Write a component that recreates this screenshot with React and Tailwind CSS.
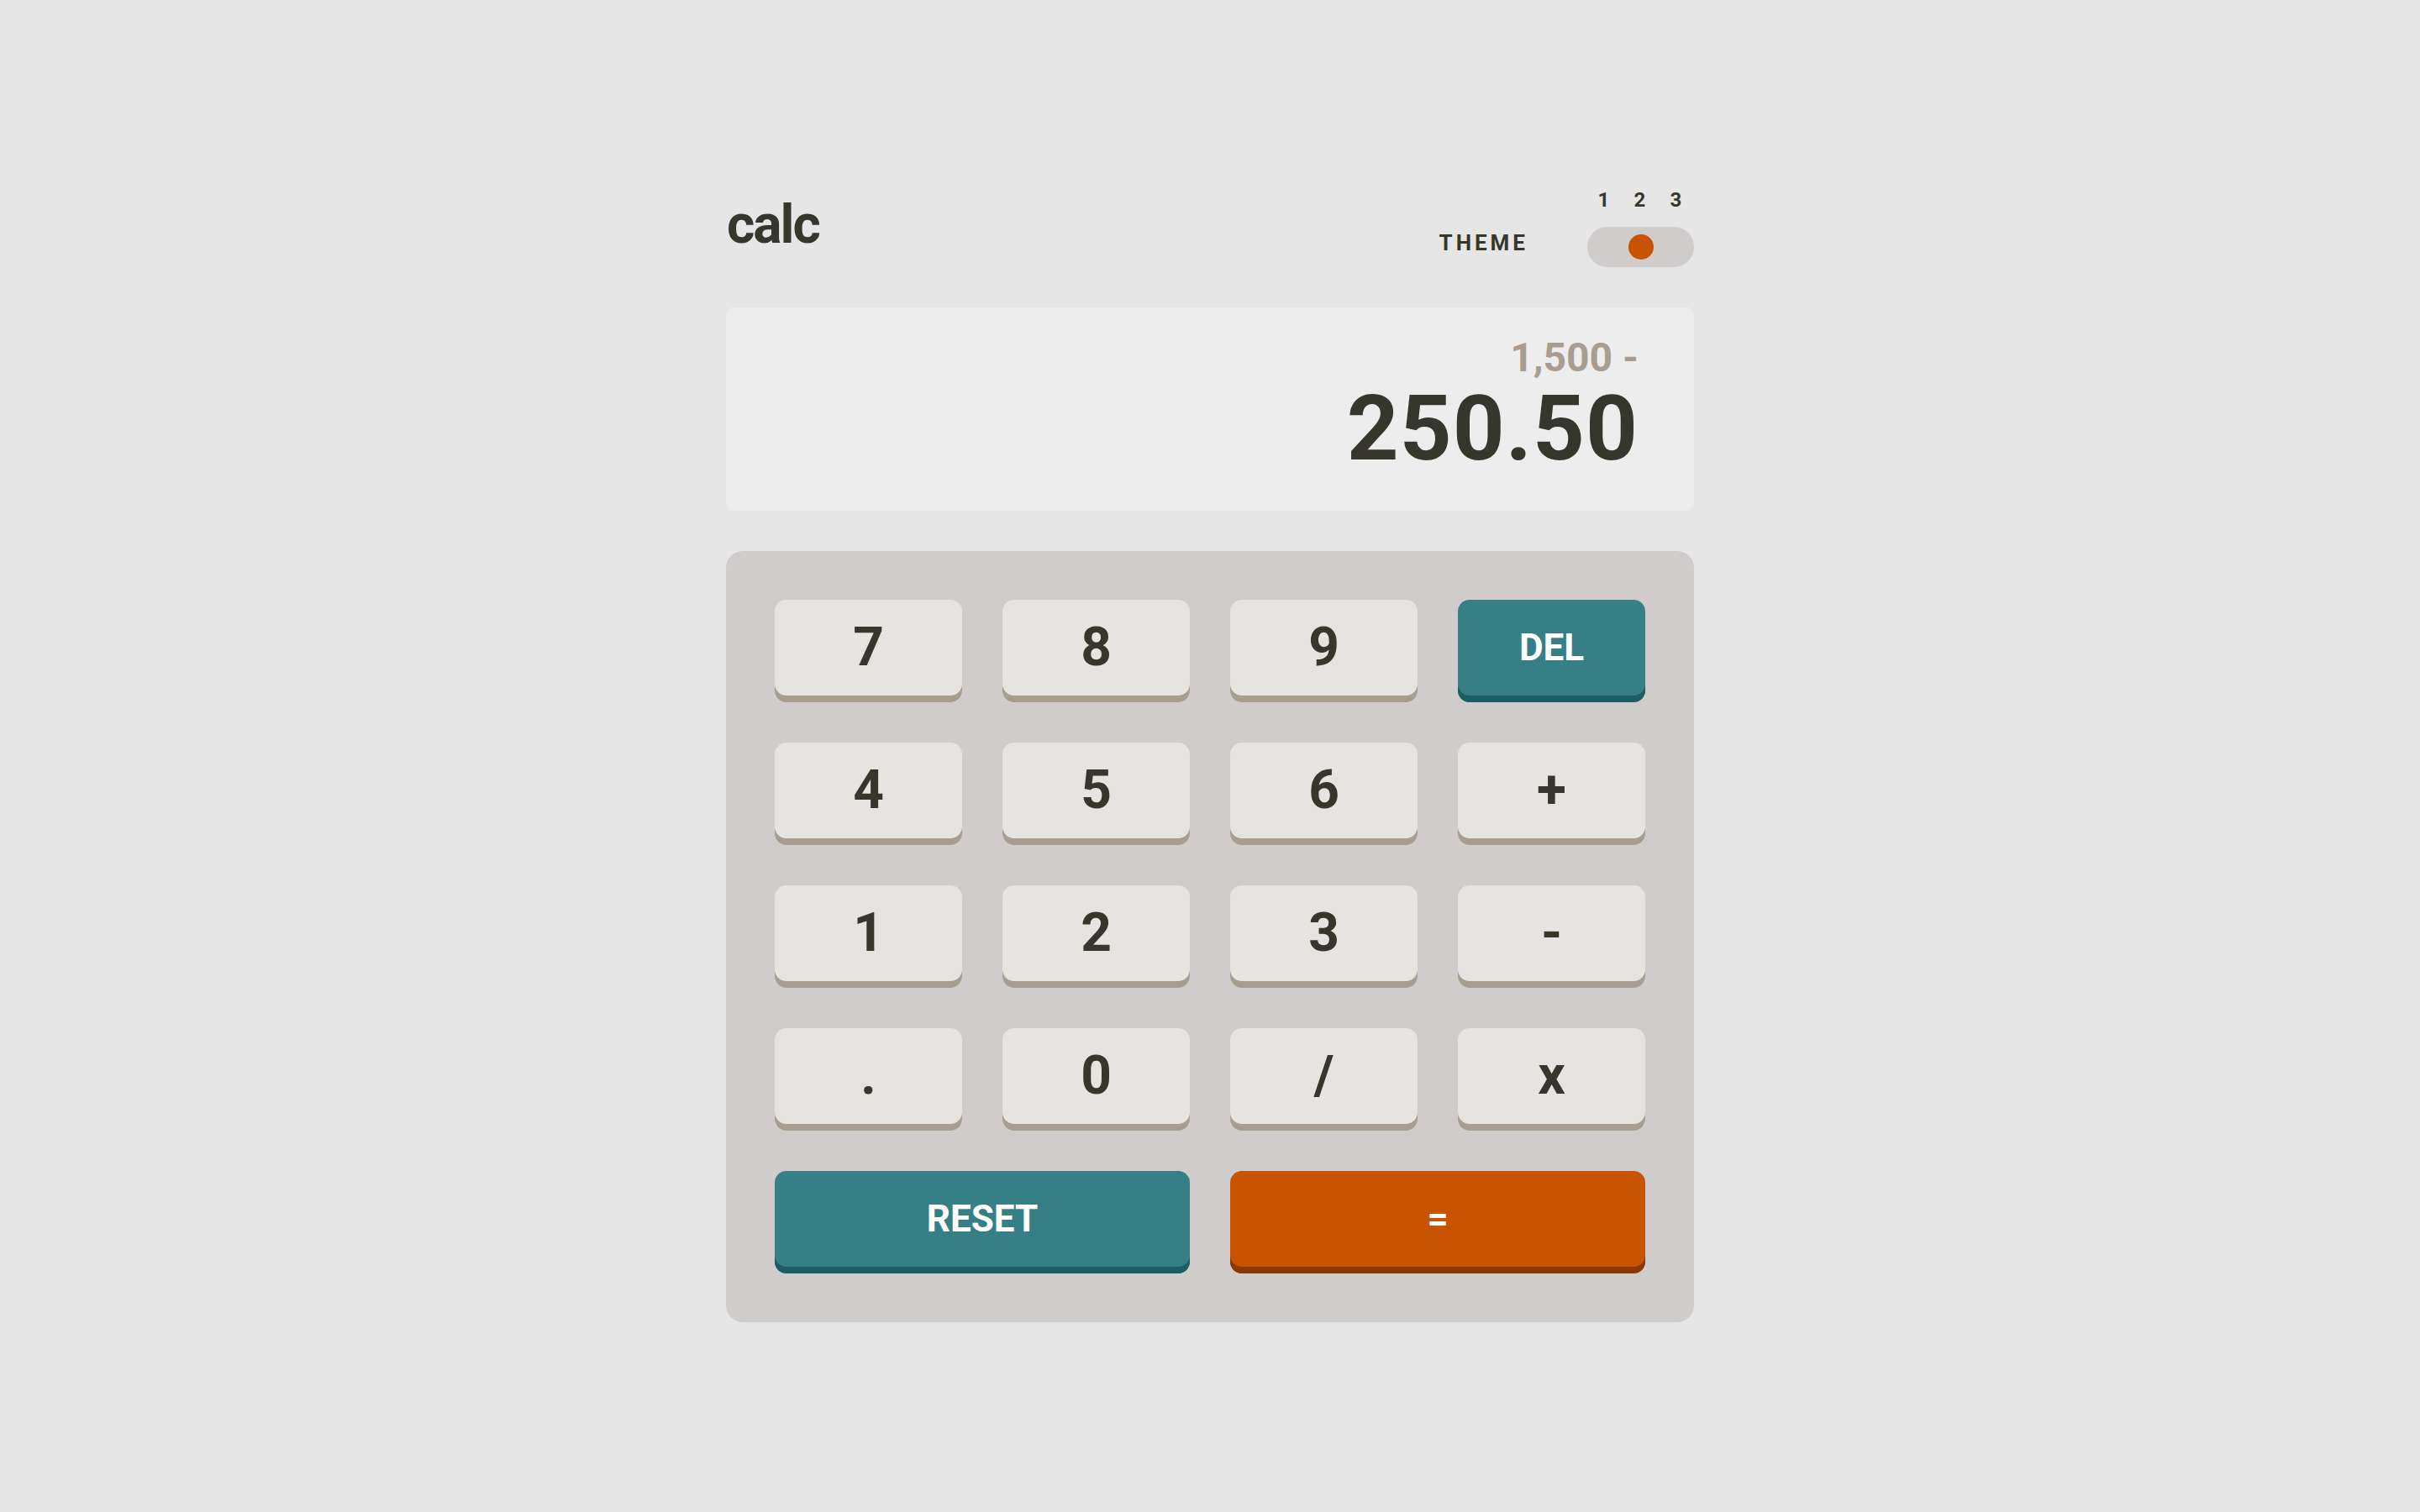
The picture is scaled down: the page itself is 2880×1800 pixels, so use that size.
import React, { useState } from 'react';

const font = { fontFamily: 'Roboto, "Liberation Sans", sans-serif' };

const keys = [
  { label: '7' }, { label: '8' }, { label: '9' }, { label: 'DEL', kind: 'teal' },
  { label: '4' }, { label: '5' }, { label: '6' }, { label: '+' },
  { label: '1' }, { label: '2' }, { label: '3' }, { label: '-' },
  { label: '.' }, { label: '0' }, { label: '/' }, { label: 'x' },
  { label: 'RESET', kind: 'teal', wide: true }, { label: '=', kind: 'orange', wide: true },
];

const Key = ({ label, kind, wide }) => {
  let cls = 'bg-[#e5e4e1] text-[#36362c] shadow-[inset_0_-8px_0_#a79e91] text-[64px]';
  if (kind === 'teal') cls = 'bg-[#377f86] text-white shadow-[inset_0_-8px_0_#1b5f65] text-[44px]';
  if (kind === 'orange') cls = 'bg-[#c85402] text-white shadow-[inset_0_-8px_0_#893901] text-[44px]';
  return (
    <button
      className={`${wide ? 'col-span-2' : ''} ${cls} h-[122px] rounded-[14px] pb-[8px] flex items-center justify-center font-bold leading-none`}
    >
      {label}
    </button>
  );
};

export default function App() {
  const [theme] = useState(2);

  return (
    <div className="min-h-screen w-full bg-[#e6e6e6] pt-[226px]" style={font}>
      <div className="w-[1152px] mx-auto">
        {/* Header */}
        <div className="flex justify-between items-end">
          <h1 className="text-[64px] leading-none font-bold text-[#36362c] tracking-[-2px] mb-[18px] ml-[1px]">calc</h1>
          <div className="flex items-end gap-[70px]">
            <span className="text-[26px] leading-none font-bold tracking-[4px] text-[#36362c] mb-[16px]">THEME</span>
            <div className="flex flex-col w-[127px]">
              <div className="grid grid-cols-3 text-[24px] leading-none font-bold text-[#36362c] text-center -ml-[2px]">
                <span>1</span>
                <span>2</span>
                <span>3</span>
              </div>
              <div className="mt-[20px] h-[48px] rounded-full bg-[#d1cccc] flex items-center justify-center">
                <span className="block w-[30px] h-[30px] rounded-full bg-[#c85402]" />
              </div>
            </div>
          </div>
        </div>

        {/* Screen */}
        <div className="mt-[48px] h-[242px] rounded-[10px] bg-[#ededed] flex flex-col items-end pr-[66px] pt-[36px]">
          <div className="text-[48px] leading-none font-bold text-[#a79e91]">1,500 -</div>
          <div className="mt-[6px] text-[108px] leading-none font-bold text-[#36362c] tracking-[1px]">250.50</div>
        </div>

        {/* Keypad */}
        <div className="mt-[48px] rounded-[20px] bg-[#d1cccc] p-[58px] grid grid-cols-4 gap-[48px]">
          {keys.map((k) => (
            <Key key={k.label} {...k} />
          ))}
        </div>
      </div>
    </div>
  );
}
